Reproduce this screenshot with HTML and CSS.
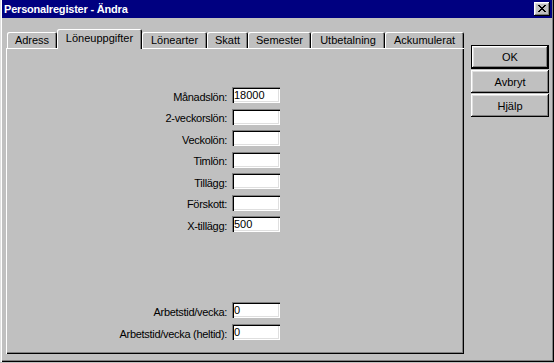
FILE: index.html
```html
<!DOCTYPE html>
<html lang="sv">
<head>
    <meta charset="UTF-8">
    <title>Personalregister - Ändra</title>
    <link rel="stylesheet" href="styles.css">
</head>
<body>
    <div class="window">
        <div class="titlebar">
            <span class="title">Personalregister - Ändra</span>
            <button class="close" aria-label="Stäng">
                <svg width="8" height="7" viewBox="0 0 8 7" shape-rendering="crispEdges">
                    <path fill="#000" d="M0 0h2v1H0z M6 0h2v1H6z M1 1h2v1H1z M5 1h2v1H5z M2 2h4v1H2z M3 3h2v1H3z M2 4h4v1H2z M1 5h2v1H1z M5 5h2v1H5z M0 6h2v1H0z M6 6h2v1H6z"/>
                </svg>
            </button>
        </div>

        <div class="content">
            <div class="tabarea">
                <div class="tabs">
                    <div class="tab tab-adress">Adress</div>
                    <div class="tab tab-lone selected">Löneuppgifter</div>
                    <div class="tab tab-arter">Lönearter</div>
                    <div class="tab tab-skatt">Skatt</div>
                    <div class="tab tab-semester">Semester</div>
                    <div class="tab tab-utbet">Utbetalning</div>
                    <div class="tab tab-ack">Ackumulerat</div>
                </div>

                <div class="panel">
                    <div class="form form-top">
                        <label>Månadslön:</label><input type="text" value="18000">
                        <label>2-veckorslön:</label><input type="text">
                        <label>Veckolön:</label><input type="text">
                        <label>Timlön:</label><input type="text">
                        <label>Tillägg:</label><input type="text">
                        <label>Förskott:</label><input type="text">
                        <label>X-tillägg:</label><input type="text" value="500">
                    </div>
                    <div class="form form-bottom">
                        <label>Arbetstid/vecka:</label><input type="text" value="0">
                        <label>Arbetstid/vecka (heltid):</label><input type="text" value="0">
                    </div>
                </div>
            </div>

            <div class="buttons">
                <button class="btn btn-default">OK</button>
                <button class="btn">Avbryt</button>
                <button class="btn">Hjälp</button>
            </div>
        </div>
    </div>
</body>
</html>
```

FILE: styles.css
```css
body {
    margin: 0;
    background-color: #c0c0c0;
    font-family: "Liberation Sans", Arial, sans-serif;
    font-size: 11px;
    color: #000;
}

.window {
    width: 554px;
    height: 362px;
    box-sizing: border-box;
    padding: 0 2px 2px 2px;
    background-color: #c0c0c0;
    box-shadow: inset 1px 0 #dfdfdf, inset 2px 0 #fff, inset -1px -1px #000, inset -2px -2px #808080;
}

.titlebar {
    height: 18px;
    background-color: #000080;
    color: #fff;
    display: flex;
    align-items: center;
    justify-content: space-between;
    padding: 0 2px 0 2px;
}

.title {
    font-weight: bold;
    letter-spacing: -0.2px;
}

.close {
    width: 16px;
    height: 14px;
    padding: 0 1px 1px 0;
    border: none;
    background-color: #c0c0c0;
    display: flex;
    align-items: center;
    justify-content: center;
    box-shadow: inset -1px -1px #000, inset 1px 1px #fff, inset -2px -2px #808080, inset 2px 2px #dfdfdf;
}

.content {
    display: flex;
    padding: 11px 0 0 4px;
}

/* tabs */
.tabarea {
    width: 458px;
    display: flex;
    flex-direction: column;
}

.tabs {
    display: flex;
    align-items: flex-end;
    height: 19px;
    padding-left: 1px;
    position: relative;
    z-index: 1;
}

.tab {
    height: 16px;
    box-sizing: border-box;
    line-height: 16px;
    text-align: center;
    border-radius: 2px 2px 0 0;
    box-shadow: inset 1px 1px #fff, inset -1px 0 #000, inset -2px 0 #808080;
}

.tab.selected {
    height: 20px;
    line-height: 18px;
    margin-bottom: -1px;
    background-color: #c0c0c0;
}

.tab-adress { width: 50px; }
.tab-lone { width: 85px; }
.tab-arter { width: 65px; }
.tab-skatt { width: 41px; }
.tab-semester { width: 63px; }
.tab-utbet { width: 74px; }
.tab-ack { width: 79px; }

.panel {
    height: 306px;
    box-sizing: border-box;
    box-shadow: inset 1px 1px #fff, inset -1px -1px #000, inset -2px -2px #808080;
}

/* form rows */
.form {
    display: grid;
    grid-template-columns: 221px 48px;
    column-gap: 5px;
    align-items: center;
}

.form-top {
    padding-top: 38px;
    grid-auto-rows: 21.5px;
}

.form-bottom {
    margin-top: 64px;
    grid-auto-rows: 22px;
}

.form label {
    text-align: right;
    letter-spacing: -0.3px;
}

.form input[type="text"] {
    width: 48px;
    height: 16px;
    box-sizing: border-box;
    border: none;
    padding: 0 2px;
    margin: 0 0 3px 0;
    font-family: inherit;
    font-size: 11px;
    background-color: #fff;
    box-shadow: inset 1px 1px #808080, inset 2px 2px #000, inset -1px -1px #fff, inset -2px -2px #dfdfdf;
    outline: none;
}

/* buttons */
.buttons {
    width: 78px;
    margin-left: 7px;
    padding-top: 16px;
    display: flex;
    flex-direction: column;
    gap: 1px;
}

.btn {
    height: 23px;
    border: none;
    padding: 0;
    font-family: inherit;
    font-size: 11px;
    color: #000;
    background-color: #c0c0c0;
    box-shadow: inset -1px -1px #000, inset 1px 1px #fff, inset -2px -2px #808080, inset 2px 2px #dfdfdf;
}

.btn-default {
    height: 24px;
    box-shadow: inset 0 0 0 1px #000, inset -2px -2px #000, inset 2px 2px #fff, inset -3px -3px #808080, inset 3px 3px #dfdfdf;
}
```
